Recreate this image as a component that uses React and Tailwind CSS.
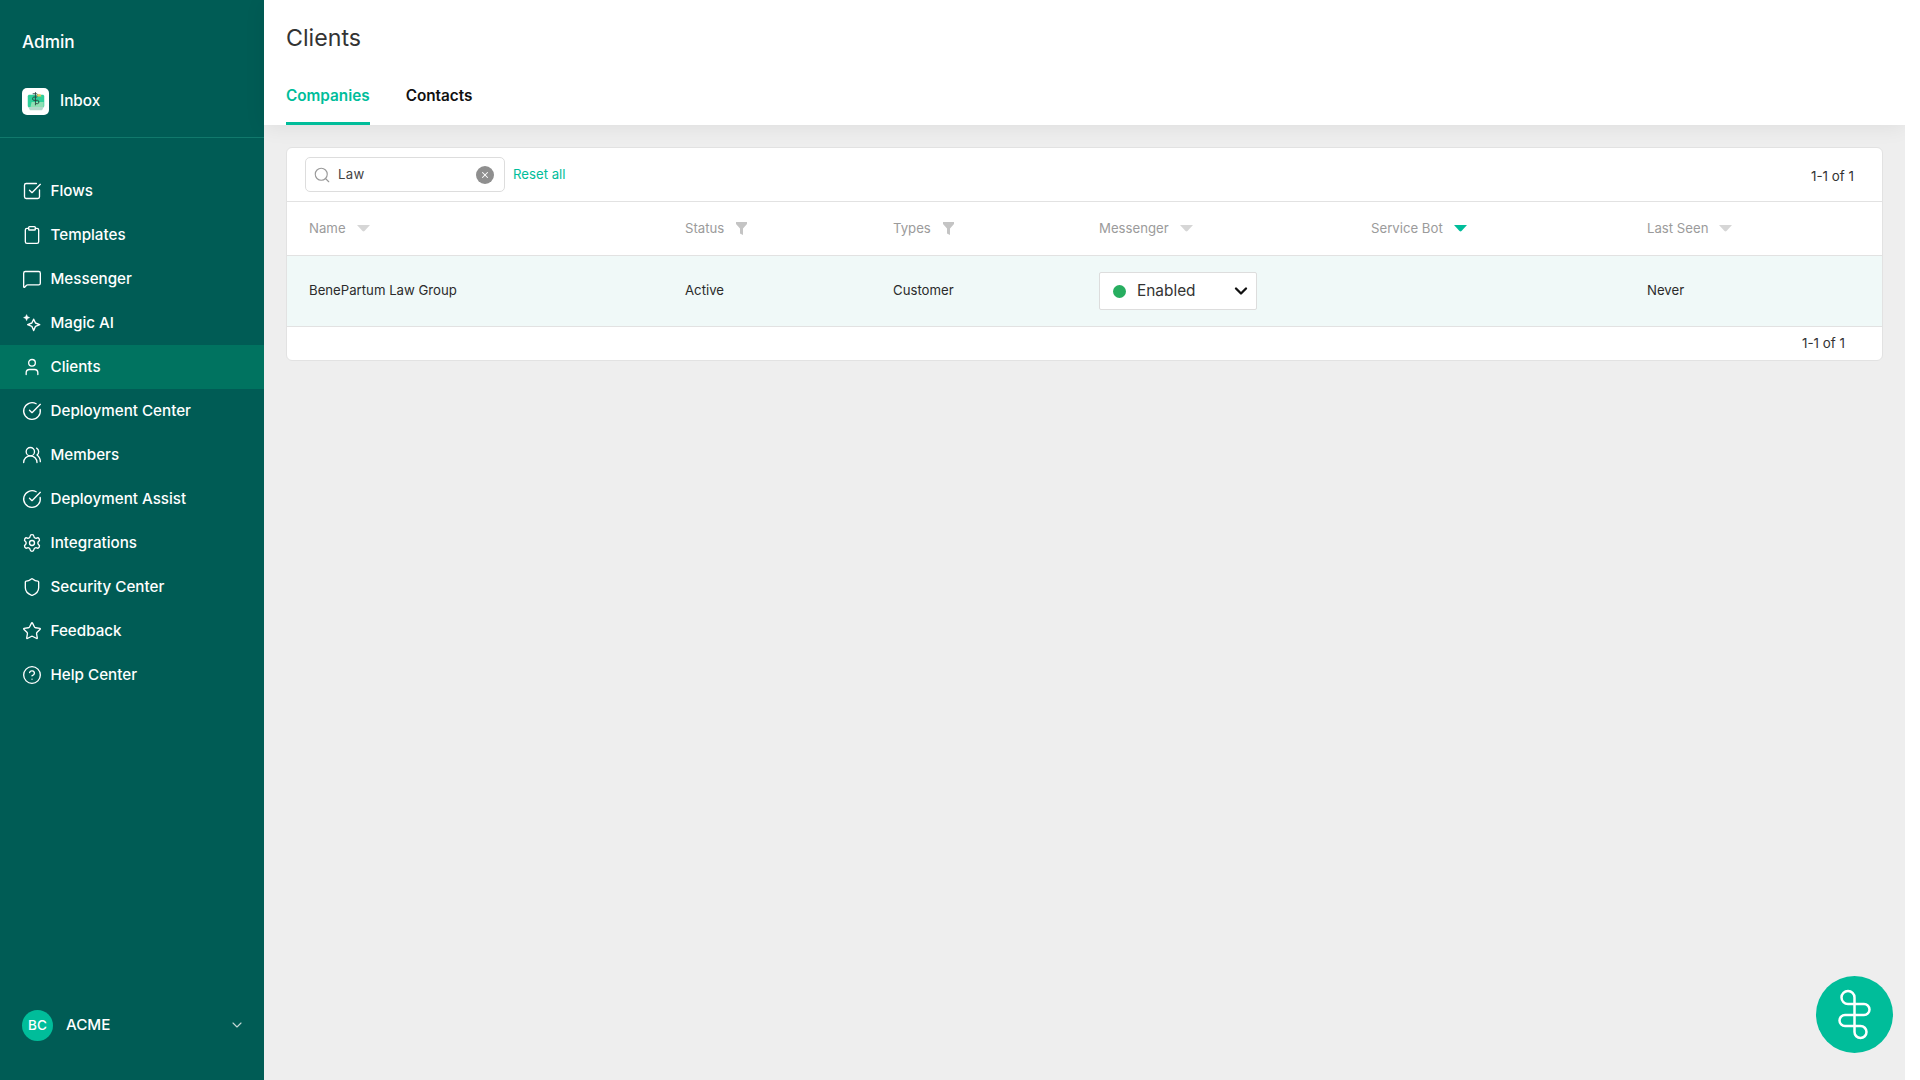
import {
  SquareCheckBig,
  Clipboard,
  MessageSquare,
  User,
  CircleCheckBig,
  UsersRound,
  Settings,
  Shield,
  Star,
  CircleHelp,
  Search,
  ChevronDown,
  X,
} from 'lucide-react';

function MagicIcon({ className }) {
  return (
    <svg className={className} viewBox="0 0 24 24" fill="none" stroke="currentColor" strokeWidth="1.7" strokeLinejoin="round">
      <path d="M14 7.500l2.200 4.500 5 2-5 2-2.200 5-2.200-5-5-2 5-2z" />
      <path d="M5.500 2l1 2.500 2.500 1-2.500 1-1 2.500-1-2.500-2.500-1 2.500-1z" fill="currentColor" strokeWidth="0.800" />
    </svg>
  );
}

const navItems = [
  { label: 'Flows', icon: SquareCheckBig },
  { label: 'Templates', icon: Clipboard },
  { label: 'Messenger', icon: MessageSquare },
  { label: 'Magic AI', icon: MagicIcon },
  { label: 'Clients', icon: User, active: true },
  { label: 'Deployment Center', icon: CircleCheckBig },
  { label: 'Members', icon: UsersRound },
  { label: 'Deployment Assist', icon: CircleCheckBig },
  { label: 'Integrations', icon: Settings },
  { label: 'Security Center', icon: Shield },
  { label: 'Feedback', icon: Star },
  { label: 'Help Center', icon: CircleHelp },
];

function SortCaret({ active }) {
  return (
    <svg className="w-[13px] h-[7px] -ml-px" viewBox="0 0 13 7">
      <path d="M0 0h13L7.500 6c-.6.600-1.400.600-2 0z" fill={active ? '#00bd9a' : '#d6d6d6'} />
    </svg>
  );
}

function FilterIcon() {
  return (
    <svg className="w-[11px] h-[13px]" viewBox="0 0 11 13">
      <path d="M0 0h11v2L7 6.500V13L4 11.500V6.500L0 2z" fill="#c4c4c4" />
    </svg>
  );
}

function HeaderCell({ label, filter, active }) {
  return (
    <div className="flex items-center gap-[12px]">
      <span>{label}</span>
      {filter ? <FilterIcon /> : <SortCaret active={active} />}
    </div>
  );
}

function InboxLogo() {
  return (
    <div className="w-[27px] h-[27px] rounded-[5px] bg-white flex items-center justify-center">
      <svg className="w-[22px] h-[22px]" viewBox="0 0 20 20" fill="none">
        <path d="M2.500 5C2.500 4 3.200 3.500 4 3.500h12c.8 0 1.500.6 1.500 1.500v8.500c0 1-.7 1.500-1.500 1.500H4c-.8 0-1.500-.5-1.500-1.500z" fill="#2ecf9a" />
        <path d="M3 14.500h14l-1.500 3h-11z" fill="#b4d9cc" />
        <path d="M6 10h11v4.500H5z" fill="#8fe0b4" />
        <path d="M7 2.500h3.500c1.500 0 1.500 3 0 3H8c-1.500 0-1.500 3 0 3h3.500c1.500 0 1.500 3 0 3H10M9.500 1v12" stroke="#25423c" strokeWidth="0.800" />
        <path d="M11 3h3l1 2h-4z" fill="#e8c75a" />
      </svg>
    </div>
  );
}

export default function App() {
  return (
    <div className="flex w-[1905px] h-[1080px] relative overflow-hidden bg-[#eeeeee] font-['Inter',sans-serif]">
      {/* Sidebar */}
      <aside className="w-[264px] shrink-0 h-full bg-[#005c55] text-white flex flex-col">
        <div className="h-[138px] shrink-0 border-b border-[#11796c] pl-[22px]">
          <div className="pt-[31px] text-[17.200px] leading-[22px] font-medium">Admin</div>
          <div className="mt-[35px] flex items-center gap-[11px]">
            <InboxLogo />
            <span className="text-[15.300px] font-medium">Inbox</span>
          </div>
        </div>
        <nav className="pt-[31px] flex-1">
          {navItems.map((item) => {
            const Icon = item.icon;
            return (
              <div
                key={item.label}
                className={`h-[44px] pl-[22px] flex items-center gap-[8.500px] ${item.active ? 'bg-[#007360]' : ''}`}
              >
                <Icon className="w-[20px] h-[20px]" strokeWidth={1.6} />
                <span className="text-[15.200px] font-medium">{item.label}</span>
              </div>
            );
          })}
        </nav>
        <div className="h-[110px] pl-[22px] pr-[19px] flex items-center">
          <div className="w-[31px] h-[31px] rounded-full bg-[#00bd9a] flex items-center justify-center text-[13.500px] font-medium">BC</div>
          <span className="ml-[13px] text-[15.200px] font-medium">ACME</span>
          <ChevronDown className="ml-auto w-[16px] h-[16px] text-[#c3d8d5]" strokeWidth={1.7} />
        </div>
      </aside>

      {/* Main */}
      <main className="flex-1 flex flex-col min-w-0">
        <header className="h-[125px] shrink-0 bg-white pl-[22px] shadow-[0_2px_20px_rgba(0,0,0,0.07)] relative">
          <h1 className="pt-[22px] text-[23.200px] leading-[32px] font-normal text-[#333333]">Clients</h1>
          <div className="mt-[19px] flex gap-[36px] text-[15.300px] font-semibold">
            <div className="h-[52px] pt-[13px] leading-[20px] text-[#00bd9a] border-b-[3px] border-[#00bd9a]">Companies</div>
            <div className="pt-[13px] leading-[20px] text-[#111111]">Contacts</div>
          </div>
        </header>

        <section className="pl-[22px] pr-[22px] pt-[22px]">
          <div className="bg-white rounded-[6px] border border-[#e2e2e2] text-[13.200px]">
            {/* Toolbar */}
            <div className="h-[54px] pl-[18px] pr-[28px] flex items-center border-b border-[#e2e2e2]">
              <div className="w-[200px] h-[35px] border border-[#dddddd] rounded-[5px] flex items-center pl-[7px] pr-[10px]">
                <Search className="w-[18px] h-[18px] text-[#999999]" strokeWidth={1.500} />
                <span className="ml-[7px] text-[#444444] tracking-[0.3px]">Law</span>
                <span className="ml-auto w-[18px] h-[18px] rounded-full bg-[#8f8f8f] flex items-center justify-center">
                  <X className="w-[10px] h-[10px] text-white" strokeWidth={2.500} />
                </span>
              </div>
              <span className="ml-[8px] text-[#00bd9a]">Reset all</span>
              <span className="ml-auto mt-[4px] text-[13.400px] text-[#333333]">1-1 of 1</span>
            </div>

            {/* Header row */}
            <div className="h-[54px] pl-[22px] grid grid-cols-[376px_208px_206px_272px_276px_1fr] items-center text-[#9b9b9b] border-b border-[#e2e2e2]">
              <HeaderCell label="Name" />
              <HeaderCell label="Status" filter />
              <HeaderCell label="Types" filter />
              <HeaderCell label="Messenger" />
              <HeaderCell label="Service Bot" active />
              <HeaderCell label="Last Seen" />
            </div>

            {/* Data row */}
            <div className="h-[71px] pl-[22px] grid grid-cols-[376px_208px_206px_272px_276px_1fr] items-center bg-[#f0f9f8] text-[#2b2b2b] border-b border-[#e2e2e2]">
              <div>BenePartum Law Group</div>
              <div>Active</div>
              <div>Customer</div>
              <div>
                <div className="w-[158px] h-[38px] bg-white border border-[#dddddd] rounded-[2px] flex items-center pl-[13px] pr-[5px] text-[15.400px] text-[#333333]">
                  <span className="w-[13px] h-[13px] rounded-full bg-[#27ae60]" />
                  <span className="ml-[11px]">Enabled</span>
                  <ChevronDown className="ml-auto w-[20px] h-[20px] text-[#111111]" strokeWidth={2.800} />
                </div>
              </div>
              <div />
              <div>Never</div>
            </div>

            {/* Footer */}
            <div className="h-[33px] pr-[37px] flex items-center justify-end text-[13.400px] text-[#333333]">1-1 of 1</div>
          </div>
        </section>
      </main>

      {/* Floating help button */}
      <button className="absolute left-[1816px] top-[976px] w-[77px] h-[77px] rounded-full bg-[#00bd9a] flex items-center justify-center">
        <svg className="w-[77px] h-[77px]" viewBox="0 0 77 77" fill="none" stroke="white" strokeWidth="2.500">
          <path d="M38.500 21.500A6.500 6.500 0 1 0 32 28H48A5.500 5.500 0 0 1 48 39H29A5.500 5.500 0 0 0 29 50H44.500A6 6 0 1 1 38.500 56V21.500" />
        </svg>
      </button>
    </div>
  );
}
